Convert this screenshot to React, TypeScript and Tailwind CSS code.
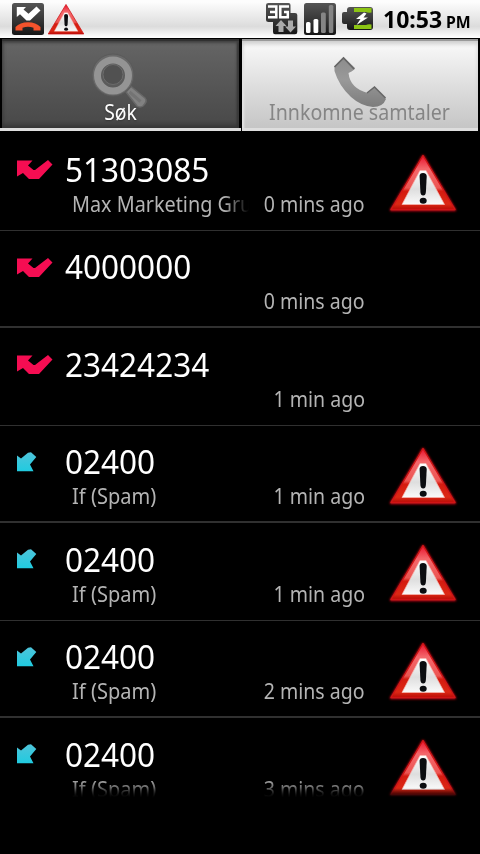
import React from "react";

type Call = {
  number: string;
  name?: string;
  ago: string;
  missed?: boolean;
  warn?: boolean;
};

const calls: Call[] = [
  { number: "51303085", name: "Max Marketing Gru", ago: "0 mins ago", missed: true, warn: true },
  { number: "4000000", ago: "0 mins ago", missed: true },
  { number: "23424234", ago: "1 min ago", missed: true },
  { number: "02400", name: "If (Spam)", ago: "1 min ago", warn: true },
  { number: "02400", name: "If (Spam)", ago: "1 min ago", warn: true },
  { number: "02400", name: "If (Spam)", ago: "2 mins ago", warn: true },
  { number: "02400", name: "If (Spam)", ago: "3 mins ago", warn: true },
];

function Defs() {
  return (
    <svg className="absolute h-0 w-0" aria-hidden="true">
      <defs>
        <linearGradient id="red" x1="0" y1="0" x2="0" y2="1">
          <stop offset="0" stopColor="#e8102c" />
          <stop offset="0.25" stopColor="#f4686c" />
          <stop offset="0.6" stopColor="#ec5552" />
          <stop offset="0.66" stopColor="#d41c10" />
          <stop offset="0.9" stopColor="#dc2815" />
          <stop offset="1" stopColor="#b80c06" />
        </linearGradient>
        <linearGradient id="inner" x1="0" y1="0" x2="0" y2="1">
          <stop offset="0" stopColor="#ffffff" />
          <stop offset="0.55" stopColor="#dedede" />
          <stop offset="1" stopColor="#fafafa" />
        </linearGradient>
        <linearGradient id="cyan" x1="0" y1="0" x2="0" y2="1">
          <stop offset="0" stopColor="#4fc4da" />
          <stop offset="1" stopColor="#20cbe0" />
        </linearGradient>
        <linearGradient id="dark" x1="0" y1="0" x2="0" y2="1">
          <stop offset="0" stopColor="#555555" />
          <stop offset="0.5" stopColor="#383838" />
          <stop offset="1" stopColor="#161616" />
        </linearGradient>
        <linearGradient id="phone" x1="0" y1="0" x2="0" y2="1">
          <stop offset="0" stopColor="#8c8c8c" />
          <stop offset="0.45" stopColor="#999999" />
          <stop offset="1" stopColor="#7c7c7c" />
        </linearGradient>
        <filter id="soft" x="-20%" y="-20%" width="140%" height="140%">
          <feGaussianBlur stdDeviation="1.2" />
        </filter>
      </defs>
    </svg>
  );
}

function Warning({ className, glow }: { className: string; glow?: boolean }) {
  return (
    <svg viewBox="0 0 72 64" preserveAspectRatio="none" className={className}>
      {glow && (
        <path d="M36 5L68 59H4Z" fill="#c01018" stroke="#c01018" strokeWidth="2.500" strokeLinejoin="round" filter="url(#soft)" />
      )}
      <path d="M36 4.500L68 58.500H4Z" fill="url(#red)" stroke="#d01416" strokeWidth="1.400" strokeLinejoin="round" />
      <path d="M33 19.500H39L57.500 53.500H15Z" fill="url(#inner)" stroke="#f6b8b0" strokeWidth="0.700" strokeLinejoin="round" />
      <path d="M32.600 25Q32.600 22 36 22Q39.800 22 39.700 25.500L38.900 41Q38.600 44.500 36.200 44.500Q33.700 44.500 33.400 41Z" fill="#0b0d10" />
      <ellipse cx="36.200" cy="49.700" rx="3.500" ry="3" fill="#0b0d10" />
    </svg>
  );
}

function StatusBar() {
  return (
    <div className="flex h-[38px] shrink-0 items-start bg-linear-to-b from-[#fdfdfd] from-5% via-[#dcdcdc] via-70% to-white pl-3">
      <svg viewBox="0 0 32 32" className="mt-[3px] h-8 w-8">
        <rect width="32" height="32" rx="2.500" fill="url(#dark)" />
        <path d="M4.800 4H14L11.500 6.500L16.500 10.800L24.500 3.500L28.500 7.500L18 17.500H14.500L8 11.200L4.800 14Z" fill="#fff" />
        <path d="M3.500 27.500V24Q8 19.300 16 19.300Q24 19.300 28.500 24V27.500H21.500V24.700Q16 23 10.500 24.700V27.500Z" fill="#f4532c" />
      </svg>
      <Warning className="mt-[2px] ml-[2px] h-[35px] w-[40px]" />
      <svg viewBox="0 0 34 34" className="mt-[2px] ml-[179px] h-[34px] w-[34px]">
        <path d="M3.500 1H23.500Q25.500 1 25.500 3V11H30Q32.300 11 32.300 13V30Q32.300 32.300 30 32.300H10Q8 32.300 8 30V20H3.500Q1 20 1 18V3Q1 1 3.500 1Z" fill="url(#dark)" />
        <path d="M3 4.500H11.300V15.300H3M5 9.900H11" fill="none" stroke="#fff" strokeWidth="2.500" />
        <path d="M24 4.500H15.300V15.300H22.800V10H19" fill="none" stroke="#fff" strokeWidth="2.500" />
        <path d="M16 18L21.500 24H18.500V30H13.500V24H10.500Z" fill="#aaa" />
        <path d="M25.500 30.500L20 24.500H23V18.500H28V24.500H31Z" fill="#aaa" />
      </svg>
      <svg viewBox="0 0 32 32" className="mt-[3px] ml-[5px] h-8 w-8">
        <rect width="32" height="32" rx="2.500" fill="url(#dark)" />
        <rect x="2" y="19" width="4.500" height="11" rx="1.500" fill="#fff" />
        <rect x="9.500" y="16" width="4.800" height="14" rx="1.500" fill="#fff" />
        <rect x="17" y="9.600" width="4.800" height="20.400" rx="1.500" fill="#858585" />
        <rect x="24.800" y="2" width="4.500" height="28" rx="1.500" fill="#858585" />
      </svg>
      <svg viewBox="0 0 34 26" className="mt-[6px] ml-[4px] h-[26px] w-[34px]">
        <path d="M7 6V4Q7 1 10 1H30Q33 1 33 4V21Q33 24 30 24H10Q7 24 7 21V18H4Q2 18 2 16V8Q2 6 4 6Z" fill="url(#dark)" />
        <path d="M14 2H31.500V6.500Q28 7 26 6H14ZM14 23H31.500V18.500Q28 18 26 19H14Z" fill="#8cc414" />
        <path d="M24 6.500L16 13H20.500L16.500 19L28 11.500H23.500L26.500 7.500Z" fill="#fff" />
      </svg>
      <div className="ml-[9px] flex h-[38px] items-baseline font-bold whitespace-nowrap text-black">
        <span className="w-[63px] text-[23.5px] leading-[39px]">
          <span className="inline-block origin-left scale-x-[0.98]">10:53</span>
        </span>
        <span className="text-[15.5px] leading-[38px]">
          <span className="inline-block origin-left scale-x-[1.02]">PM</span>
        </span>
      </div>
    </div>
  );
}

function Tabs() {
  return (
    <div className="flex h-[95px] shrink-0 bg-black pt-px">
      <div className="h-[92px] w-[241px] border-b-[3px] border-[#dedede] bg-black pl-[2px]">
        <div className="flex h-[89px] w-[237px] flex-col items-center border-t-2 border-[#303030] bg-linear-to-b from-[#656565] to-[#484848] shadow-[inset_0_-3px_4px_#363636,inset_0_2px_3px_#444,inset_-2px_0_2px_#383838]">
          <svg viewBox="0 0 60 60" className="mt-[11px] mr-[2px] -mb-[4px] h-[60px] w-[60px] shrink-0">
            <path d="M36 40L41 34.500L55 46Q58 49 53 54Q50 56 47 54Z" fill="#828282" stroke="#686868" strokeWidth="1.500" />
            <path d="M39.500 40L50.500 49.500" stroke="#747474" strokeWidth="3" />
            <circle cx="23" cy="23" r="21" fill="#696969" stroke="#5a5a5a" />
            <circle cx="23" cy="23.500" r="15.500" fill="#5b5b5b" stroke="#949494" strokeWidth="7" />
            <circle cx="23" cy="22.500" r="10" fill="#515151" stroke="#6c6c6c" />
          </svg>
          <span className="relative -mt-[12px] inline-block origin-center scale-x-[0.88] text-[22px] leading-[30px] text-white [text-shadow:0_1px_2px_#333]">Søk</span>
        </div>
      </div>
      <div className="ml-px flex h-[92px] w-[236px] flex-col items-center border-t-2 border-[#999] bg-linear-to-b from-[#fafafa] via-[#dedede] to-[#c4c4c4] shadow-[inset_0_-3px_0_#dedede,inset_0_3px_4px_#ccc,inset_2px_0_2px_#eee]">
        <svg viewBox="0 0 60 60" className="mt-[12px] mr-[2px] h-[60px] w-[60px] shrink-0">
          <path d="M13.500 7L25 18Q25.500 19.500 18.500 23Q20 38 37.500 43L44.500 37L56 49Q53 57 43 57Q31 56 21 47Q9 36 4.500 21V16Z" fill="url(#phone)" transform="translate(1 -3)" />
          <path d="M5.500 14L14.500 5L25 16M38 40L45.500 34L56.500 45" fill="none" stroke="#666" strokeWidth="1.600" />
        </svg>
        <span className="relative -mt-[17px] mr-px inline-block scale-x-[0.891] text-[22px] leading-[30px] whitespace-nowrap text-[#858585]">Innkomne samtaler</span>
      </div>
    </div>
  );
}

function CallArrow({ missed }: { missed?: boolean }) {
  return missed ? (
    <svg viewBox="0 0 36 22" className="mt-[26px] h-[22px] w-9">
      <path d="M0 1.500H15.500L11 6.500L16.500 11H18L31 1L35.500 5.500L22 20H12L6 14L0 17.500Z" fill="#f50d52" />
    </svg>
  ) : (
    <svg viewBox="0 0 36 22" className="mt-[26px] h-[22px] w-9">
      <path d="M0 3.500L4 6.500L11 0.700L14 0.200L19.300 5L13 12.500L16.500 19.300H0Z" fill="url(#cyan)" />
    </svg>
  );
}

function CallRow({ call, thick, last }: { call: Call; thick: boolean; last: boolean }) {
  return (
    <li className={`flex h-[97.5px] shrink-0 border-[#303030] pl-[17px] ${thick ? "border-b-2" : "border-b"}`}>
      <CallArrow missed={call.missed} />
      <div className="ml-3 w-[300px]">
        <div className="mt-[13.75px] h-[46px] text-[33px] leading-[46px] text-white">
          <span className="inline-block origin-left scale-x-[0.955]">{call.number}</span>
        </div>
        <div
          className={`-mt-[4.95px] flex h-[30px] justify-between pl-[7px] text-[22px] leading-[30px] whitespace-nowrap text-[#b4b4b4] ${
            last ? "[mask-image:linear-gradient(to_bottom,black_20%,transparent_88%)]" : ""
          }`}
        >
          <div className={call.missed ? "w-[177px] overflow-hidden [mask-image:linear-gradient(to_right,black_86%,transparent)]" : "w-[177px]"}>
            <span className={call.missed ? "inline-block origin-left scale-x-[0.9]" : "inline-block origin-left scale-x-[0.91]"}>{call.name}</span>
          </div>
          <span className="flex w-[115px] justify-end">
            <span className="inline-block origin-right scale-x-[0.888]">{call.ago}</span>
          </span>
        </div>
      </div>
      {call.warn && <Warning glow className="mt-[18px] ml-[22px] h-16 w-[72px]" />}
    </li>
  );
}

export default function App() {
  return (
    <div className="flex h-[854px] w-[480px] flex-col overflow-hidden bg-black font-['Noto_Sans',sans-serif]">
      <Defs />
      <StatusBar />
      <Tabs />
      <ul className="flex h-[665px] flex-col overflow-hidden [mask-image:linear-gradient(to_bottom,black_98.5%,transparent)]">
        {calls.map((call, i) => (
          <CallRow key={i} call={call} thick={i % 2 === 1} last={i === calls.length - 1} />
        ))}
      </ul>
    </div>
  );
}
